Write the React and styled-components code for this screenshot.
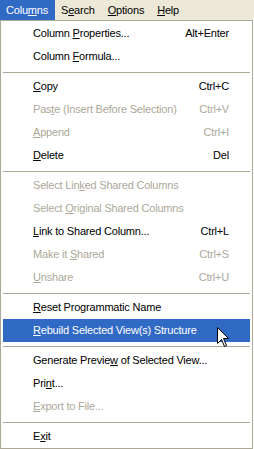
import React from "react";
import styled, { createGlobalStyle } from "styled-components";

const GlobalStyle = createGlobalStyle`
  body {
    margin: 0;
    background: #ffffff;
    font-family: "Liberation Sans", Arial, sans-serif;
    font-size: 11px;
    letter-spacing: -0.2px;
    color: #000;
  }
`;

const Page = styled.div`
  position: relative;
  width: 254px;
  height: 449px;
  overflow: hidden;
`;

const MenuBar = styled.div`
  display: flex;
  height: 20px;
  background: #ece9d8;
`;

const BarItem = styled.div`
  height: 20px;
  line-height: 20px;
  padding: 0 7px 0 6px;
  color: ${(p) => (p.$active ? "#ffffff" : "#000000")};
  background: ${(p) => (p.$active ? "#316ac5" : "transparent")};
`;

const Dropdown = styled.div`
  box-sizing: border-box;
  width: 253px;
  border: 1px solid #aca899;
  background: #ffffff;
  padding: 1px 0 0;
`;

const Item = styled.div`
  display: flex;
  justify-content: space-between;
  height: 23px;
  line-height: 23px;
  margin: 0 2px;
  padding: 0 21px 0 30px;
  white-space: nowrap;
  color: ${(p) => (p.$disabled ? "#aca899" : p.$hover ? "#ffffff" : "#000000")};
  background: ${(p) => (p.$hover ? "#316ac5" : "transparent")};
`;

const Shortcut = styled.span`
  text-align: right;
`;

const Separator = styled.div`
  height: 1px;
  margin: 4px 2px 2px;
  background: #aca899;
`;

const Key = styled.u`
  text-decoration: underline;
  text-underline-offset: 1px;
`;

const Cursor = styled.svg`
  position: absolute;
  left: 217px;
  top: 327px;
`;

const label = (text, key) => {
  if (key == null) return text;
  return (
    <>
      {text.slice(0, key)}
      <Key>{text[key]}</Key>
      {text.slice(key + 1)}
    </>
  );
};

const groups = [
  [
    { text: "Column Properties...", key: 7, sc: "Alt+Enter" },
    { text: "Column Formula...", key: 7 },
  ],
  [
    { text: "Copy", key: 0, sc: "Ctrl+C" },
    { text: "Paste (Insert Before Selection)", key: 3, sc: "Ctrl+V", off: true },
    { text: "Append", key: 0, sc: "Ctrl+I", off: true },
    { text: "Delete", key: 0, sc: "Del" },
  ],
  [
    { text: "Select Linked Shared Columns", key: 10, off: true },
    { text: "Select Original Shared Columns", key: 7, off: true },
    { text: "Link to Shared Column...", key: 0, sc: "Ctrl+L" },
    { text: "Make it Shared", key: 8, sc: "Ctrl+S", off: true },
    { text: "Unshare", key: 0, sc: "Ctrl+U", off: true },
  ],
  [
    { text: "Reset Programmatic Name", key: 0 },
    { text: "Rebuild Selected View(s) Structure", key: 0, hover: true },
  ],
  [
    { text: "Generate Preview of Selected View...", key: 15 },
    { text: "Print...", key: 3 },
    { text: "Export to File...", key: 0, off: true },
  ],
  [{ text: "Exit", key: 1 }],
];

export default function App() {
  return (
    <Page>
      <GlobalStyle />
      <MenuBar>
        <BarItem $active>{label("Columns", 4)}</BarItem>
        <BarItem>{label("Search", 1)}</BarItem>
        <BarItem>{label("Options", 0)}</BarItem>
        <BarItem>{label("Help", 0)}</BarItem>
      </MenuBar>
      <Dropdown>
        {groups.map((group, gi) => (
          <React.Fragment key={gi}>
            {gi > 0 && <Separator />}
            {group.map((it) => (
              <Item key={it.text} $disabled={it.off} $hover={it.hover}>
                <span>{label(it.text, it.key)}</span>
                {it.sc && <Shortcut>{it.sc}</Shortcut>}
              </Item>
            ))}
          </React.Fragment>
        ))}
      </Dropdown>
      <Cursor width="13" height="21" viewBox="0 0 13 21">
        <path
          d="M0.5 0.5 L0.5 16.5 L4.5 12.5 L7.5 19.5 L9.5 18.5 L6.5 11.5 L11.5 11.5 Z"
          fill="#ffffff"
          stroke="#000000"
          strokeWidth="1"
        />
      </Cursor>
    </Page>
  );
}
